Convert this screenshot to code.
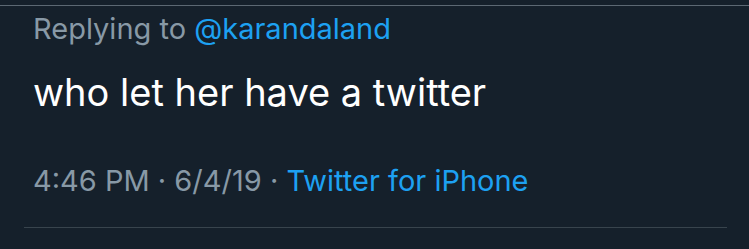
const App = () => {
  return (
    <div className="w-[749px] h-[249px] bg-[#15202b] overflow-hidden font-['Inter','Liberation_Sans',Arial,sans-serif]">
      <div className="h-[5px]" />
      <div className="h-px bg-[#5c6873]" />
      <div className="px-[33px] pt-[6px]">
        {/* reply context */}
        <p className="text-[29px] leading-[34px] text-[#8899a6]">
          Replying to <span className="text-[#1da1f2]">@karandaland</span>
        </p>
        {/* tweet body */}
        <p className="mt-[24px] text-[38px] leading-[44px] text-white">
          who let her have a twitter
        </p>
        {/* meta */}
        <p className="mt-[50px] text-[29px] leading-[34px] text-[#8899a6]">
          4:46 PM · 6/4/19 · <span className="text-[#1da1f2]">Twitter for iPhone</span>
        </p>
      </div>
      <div className="ml-[24px] mr-[22px] mt-[29px] h-px bg-[#38444d]" />
    </div>
  );
};

export default App;
